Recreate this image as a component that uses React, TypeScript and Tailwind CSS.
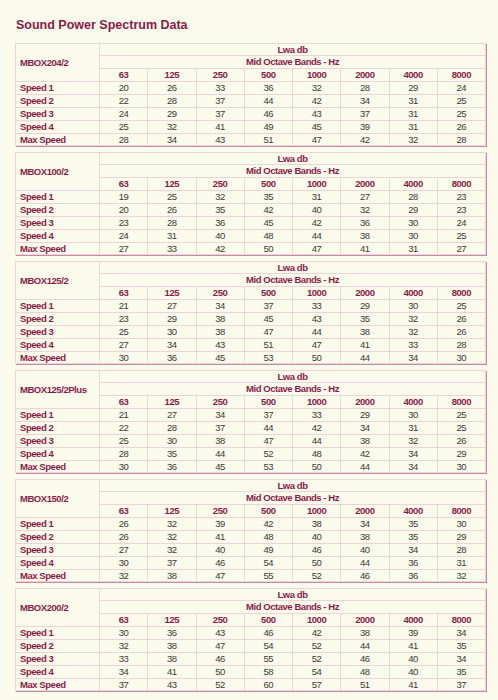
import React from "react";

type Row = [string, number[]];
type Block = { name: string; rows: Row[] };

const bands = ["63", "125", "250", "500", "1000", "2000", "4000", "8000"];
const labels = ["Speed 1", "Speed 2", "Speed 3", "Speed 4", "Max Speed"];

const raw: [string, number[][]][] = [
  ["MBOX204/2", [
    [20, 26, 33, 36, 32, 28, 29, 24],
    [22, 28, 37, 44, 42, 34, 31, 25],
    [24, 29, 37, 46, 43, 37, 31, 25],
    [25, 32, 41, 49, 45, 39, 31, 26],
    [28, 34, 43, 51, 47, 42, 32, 28],
  ]],
  ["MBOX100/2", [
    [19, 25, 32, 35, 31, 27, 28, 23],
    [20, 26, 35, 42, 40, 32, 29, 23],
    [23, 28, 36, 45, 42, 36, 30, 24],
    [24, 31, 40, 48, 44, 38, 30, 25],
    [27, 33, 42, 50, 47, 41, 31, 27],
  ]],
  ["MBOX125/2", [
    [21, 27, 34, 37, 33, 29, 30, 25],
    [23, 29, 38, 45, 43, 35, 32, 26],
    [25, 30, 38, 47, 44, 38, 32, 26],
    [27, 34, 43, 51, 47, 41, 33, 28],
    [30, 36, 45, 53, 50, 44, 34, 30],
  ]],
  ["MBOX125/2Plus", [
    [21, 27, 34, 37, 33, 29, 30, 25],
    [22, 28, 37, 44, 42, 34, 31, 25],
    [25, 30, 38, 47, 44, 38, 32, 26],
    [28, 35, 44, 52, 48, 42, 34, 29],
    [30, 36, 45, 53, 50, 44, 34, 30],
  ]],
  ["MBOX150/2", [
    [26, 32, 39, 42, 38, 34, 35, 30],
    [26, 32, 41, 48, 40, 38, 35, 29],
    [27, 32, 40, 49, 46, 40, 34, 28],
    [30, 37, 46, 54, 50, 44, 36, 31],
    [32, 38, 47, 55, 52, 46, 36, 32],
  ]],
  ["MBOX200/2", [
    [30, 36, 43, 46, 42, 38, 39, 34],
    [32, 38, 47, 54, 52, 44, 41, 35],
    [33, 38, 46, 55, 52, 46, 40, 34],
    [34, 41, 50, 58, 54, 48, 40, 35],
    [37, 43, 52, 60, 57, 51, 41, 37],
  ]],
];

const blocks: Block[] = raw.map(([name, vals]) => ({
  name,
  rows: vals.map((v, i) => [labels[i], v] as Row),
}));

const cell = "border border-[#f0d2dc] p-0 h-[12px] leading-[12px]";
const cellS = "border border-[#f0d2dc] p-0 h-[11px] leading-[11px]";

function SpecTable({ block }: { block: Block }) {
  return (
    <table className="w-[471px] table-fixed border-collapse border border-[#cf98b0] text-[9.5px] tracking-[-0.45px] shadow-[1px_1px_0_#c58aa4]">
      <colgroup>
        <col className="w-[84px]" />
        {bands.map((b) => (
          <col key={b} />
        ))}
      </colgroup>
      <tbody>
        <tr>
          <td rowSpan={3} className={`${cell} pl-[4px] font-bold text-[#8b1a4a]`}>
            {block.name}
          </td>
          <td colSpan={8} className={`${cellS} text-center font-bold text-[#8b1a4a]`}>
            Lwa db
          </td>
        </tr>
        <tr>
          <td colSpan={8} className={`${cell} text-center font-bold text-[#8b1a4a]`}>
            Mid Octave Bands - Hz
          </td>
        </tr>
        <tr>
          {bands.map((b) => (
            <td key={b} className={`${cell} text-center font-bold text-[#8b1a4a]`}>
              {b}
            </td>
          ))}
        </tr>
        {block.rows.map(([label, vals], ri) => {
          const c = ri === 4 ? cellS : cell;
          return (
            <tr key={label}>
              <td className={`${c} pl-[4px] font-bold text-[#8b1a4a]`}>{label}</td>
              {vals.map((v, i) => (
                <td key={i} className={`${c} text-center text-[#3a3a3a]`}>
                  {v}
                </td>
              ))}
            </tr>
          );
        })}
      </tbody>
    </table>
  );
}

export default function App() {
  return (
    <div
      className="min-h-[700px] w-[498px] bg-[#fbfbec] px-[15px] pt-[17px]"
      style={{ fontFamily: '"Liberation Sans", Arial, sans-serif' }}
    >
      <h1 className="pl-[1px] text-[12.5px] font-bold leading-[16px] text-[#8b1a4a]">
        Sound Power Spectrum Data
      </h1>
      <div className="mt-[10px] flex flex-col gap-[6px]">
        {blocks.map((b) => (
          <SpecTable key={b.name} block={b} />
        ))}
      </div>
    </div>
  );
}
